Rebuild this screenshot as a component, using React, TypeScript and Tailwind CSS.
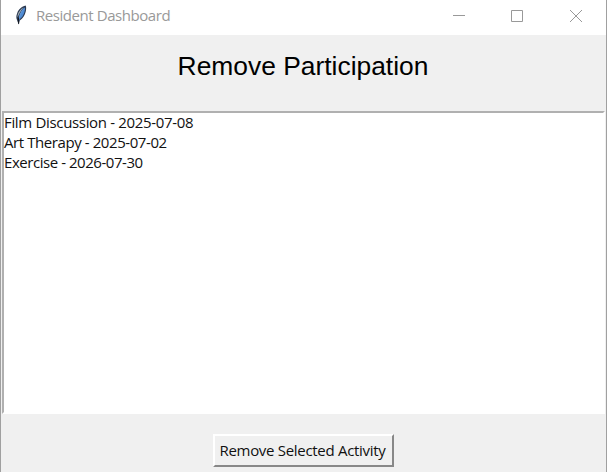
import React from "react";

const activities = [
  { name: "Film Discussion", date: "2025-07-08", tracking: "tracking-[-0.33px]" },
  { name: "Art Therapy", date: "2025-07-02", tracking: "tracking-[-0.42px]" },
  { name: "Exercise", date: "2026-07-30", tracking: "tracking-[-0.45px]" },
];

// Colours of the sliver of desktop visible past the right window edge.
const edgeMarks = [
  { top: 45, height: 2, color: "#3d4045" },
  { top: 48, height: 2, color: "#4c6478" },
  { top: 51, height: 2, color: "#4a4a4a" },
  { top: 54, height: 2, color: "#3d4045" },
  { top: 57, height: 2, color: "#37383c" },
  { top: 94, height: 2, color: "#6c6c6c" },
  { top: 105, height: 4, color: "#a89a78" },
  { top: 120, height: 4, color: "#8c7f66" },
  { top: 144, height: 6, color: "#aca084" },
  { top: 185, height: 5, color: "#5c4044" },
  { top: 197, height: 8, color: "#3c78ac" },
  { top: 207, height: 2, color: "#4a86b4" },
  { top: 211, height: 5, color: "#5a8cb4" },
  { top: 245, height: 5, color: "#5c4044" },
  { top: 284, height: 2, color: "#5f6070" },
  { top: 305, height: 4, color: "#4c4850" },
  { top: 321, height: 15, color: "#74a0a8" },
  { top: 347, height: 4, color: "#a8926c" },
  { top: 364, height: 3, color: "#44506c" },
  { top: 368, height: 3, color: "#7894a8" },
  { top: 386, height: 3, color: "#4c6484" },
  { top: 390, height: 2, color: "#906c58" },
  { top: 394, height: 2, color: "#505050" },
  { top: 398, height: 2, color: "#707070" },
  { top: 432, height: 3, color: "#444444" },
  { top: 438, height: 2, color: "#505050" },
  { top: 449, height: 2, color: "#606060" },
];

function Feather() {
  return (
    <svg className="block h-[20px] w-[12px]" viewBox="0 0 12 20" fill="none">
      <path d="M10.6 0.5 C7 1.2 3.4 4.6 2.2 8.2 C1 11 1.1 13.2 2.2 15.4 L3.6 19.5 L4.8 15.6 C8 13.5 9.6 10.5 10.7 6.8 C11.4 4 11.3 1.6 10.6 0.5Z" fill="#2b3850" />
      <path d="M8.6 2.2 C5.8 4 3.4 6.8 2.6 10.2 L2.5 12.6 C4 9 6 5.2 8.6 2.2Z" fill="#a7b4bc" />
      <path d="M10 2.2 C10.4 5 9 9 7.6 11.3 C6.6 13 5.5 13.6 4.4 14.2 C3.6 10 6.4 5.4 10 2.2Z" fill="#4e8ad2" />
      <path d="M8.8 3.6 C6.4 6.6 4.4 10.2 3.7 15.6" stroke="#5f96d8" strokeWidth="1.1" />
      <path d="M3.4 12.5 L3.6 18.8" stroke="#141922" strokeWidth="1.1" />
    </svg>
  );
}

function TitleBar() {
  return (
    <header className="flex h-[35px] shrink-0 items-center bg-white pl-[14px] text-[#999]">
      <div className="pb-[6px]"><Feather /></div>
      <span className="ml-[9px] whitespace-nowrap pb-[6px] text-[15px] leading-5 tracking-[-0.44px]">Resident Dashboard</span>
      <svg className="ml-auto mr-[24px] h-[35px] w-[129px]" viewBox="0 0 129 35" fill="none" stroke="#999">
        <path d="M0 15.5H12M58.5 10.5H69.5V21.5H58.5ZM117 10L129 22M129 10L117 22" />
      </svg>
    </header>
  );
}

export default function App() {
  return (
    <div className="relative flex h-[472px] w-[607px] flex-col overflow-hidden border-x border-[#a0a0a0] bg-[#f0f0f0] font-['Open_Sans','Noto_Sans',sans-serif]">
      <TitleBar />
      <main className="flex flex-1 flex-col">
        <h1 className="flex h-[76px] items-center justify-center whitespace-nowrap pb-[15px] pr-[1px] font-['Liberation_Sans',Arial,sans-serif] text-[26.4px] leading-8 text-black">
          Remove Participation
        </h1>
        <ul className="ml-px mr-px h-[303px] shrink-0 border-2 border-b-white border-l-[#b0b0b0] border-r-white border-t-[#b0b0b0] bg-white text-[15px] leading-5 text-[#111]">
          {activities.map((a) => (
            <li key={a.name} className={"h-5 whitespace-nowrap leading-[18px] " + a.tracking}>
              {a.name} - {a.date}
            </li>
          ))}
        </ul>
        <div className="flex justify-center pt-5">
          <button className="h-[33px] w-[181px] whitespace-nowrap border-2 border-b-[#888] border-l-white border-r-[#888] border-t-white bg-[#f0f0f0] pb-[2px] pr-[2px] text-[15px] leading-5 tracking-[-0.3px] text-[#111]">
            Remove Selected Activity
          </button>
        </div>
      </main>
      {edgeMarks.map((m) => (
        <i key={m.top} className="absolute -right-px w-px" style={{ top: m.top, height: m.height, background: m.color }} />
      ))}
      <i className="absolute -left-px top-[352px] h-px w-px bg-[#222]" />
    </div>
  );
}
